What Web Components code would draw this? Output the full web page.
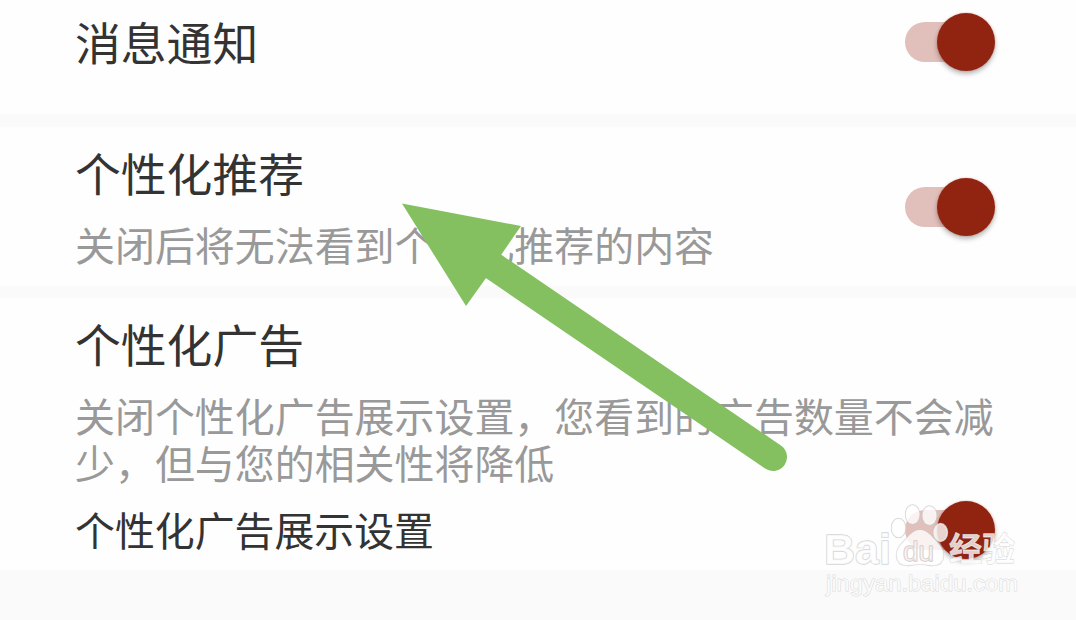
<!DOCTYPE html>
<html lang="zh-CN">
<head>
<meta charset="utf-8">
<title>消息通知</title>
<style>
  body {
    margin: 0;
    width: 1076px;
    height: 620px;
    overflow: hidden;
    background: #fafafa;
    color: #333;
    font-family: "Noto Sans CJK SC", sans-serif;
  }
</style>
</head>
<body>
<settings-page>
  <settings-row style="height: 114px; --top: 13px; --switch: 13px">
    <span slot="title">消息通知</span>
  </settings-row>
  <settings-row style="height: 159px; --top: 17px; --switch: 51px">
    <span slot="title">个性化推荐</span>
    <span slot="desc">关闭后将无法看到个性化推荐的内容</span>
  </settings-row>
  <settings-row style="height: 272px; --top: 17px; --switch: 203px">
    <span slot="title">个性化广告</span>
    <span slot="desc">关闭个性化广告展示设置，您看到的广告数量不会减少，但与您的相关性将降低</span>
    <span slot="extra">个性化广告展示设置</span>
  </settings-row>
</settings-page>
<pointer-arrow></pointer-arrow>
<site-watermark></site-watermark>

<script>
(() => {
  class SettingsPage extends HTMLElement {
    constructor() {
      super();
      this.attachShadow({ mode: "open" });
      this.shadowRoot.innerHTML = /* html */ `
        <style>
          :host {
            display: flex;
            flex-direction: column;
            gap: 12.5px;
          }
        </style>
        <slot></slot>
      `;
    }
  }

  class ToggleSwitch extends HTMLElement {
    constructor() {
      super();
      this.attachShadow({ mode: "open" });
      this.shadowRoot.innerHTML = /* html */ `
        <style>
          :host {
            display: flex;
            align-items: center;
            justify-content: flex-end;
            width: 91px;
            height: 58px;
          }

          .track {
            flex: none;
            width: 80px;
            height: 40px;
            margin-right: -48px;
            border-radius: 20px;
            background: #e1bfba;
          }

          .thumb {
            flex: none;
            width: 58px;
            height: 58px;
            border-radius: 50%;
            background: #912410;
            box-shadow: 0 3px 5px rgba(0, 0, 0, 0.28), 0 0 2px rgba(200, 80, 60, 0.4);
          }
        </style>
        <div class="track"></div>
        <div class="thumb"></div>
      `;
    }
  }

  class SettingsRow extends HTMLElement {
    constructor() {
      super();
      this.attachShadow({ mode: "open" });
      this.shadowRoot.innerHTML = /* html */ `
        <style>
          :host {
            display: flex;
            justify-content: space-between;
            box-sizing: border-box;
            padding: 0 81.5px 0 75px;
            background: #fefefe;
          }

          .text {
            width: 0;
            padding-top: var(--top);
          }

          .title {
            width: 400px;
            font-size: 45.8px;
            line-height: 56px;
          }

          .desc {
            width: 924px;
            margin-top: 21px;
            color: #999;
            font-size: 39.95px;
            line-height: 47px;
          }

          .extra {
            width: 500px;
            margin-top: 18px;
            font-size: 39.9px;
            line-height: 50px;
          }

          toggle-switch {
            margin-top: var(--switch);
          }
        </style>
        <div class="text">
          <div class="title"><slot name="title"></slot></div>
          <div class="desc"><slot name="desc"></slot></div>
          <div class="extra"><slot name="extra"></slot></div>
        </div>
        <toggle-switch></toggle-switch>
      `;
    }
  }

  class PointerArrow extends HTMLElement {
    constructor() {
      super();
      this.attachShadow({ mode: "open" });
      this.shadowRoot.innerHTML = /* html */ `
        <style>
          :host {
            position: absolute;
            left: 402px;
            top: 203px;
          }

          svg {
            display: block;
          }
        </style>
        <svg width="386" height="270" viewBox="402 203 386 270">
          <path d="M402 203.500L521 226L501 255L486 278L466 306Z" fill="#84bf60"/>
          <path d="M490 264L773 457" stroke="#84bf60" stroke-width="28" stroke-linecap="round"/>
        </svg>
      `;
    }
  }

  class SiteWatermark extends HTMLElement {
    constructor() {
      super();
      this.attachShadow({ mode: "open" });
      this.shadowRoot.innerHTML = /* html */ `
        <style>
          :host {
            position: absolute;
            left: 816px;
            top: 496px;
          }

          svg {
            display: block;
          }

          .mark {
            fill: rgba(255, 255, 255, 0.8);
            stroke: rgba(205, 205, 205, 0.85);
            stroke-width: 1.4;
            stroke-linejoin: round;
            paint-order: stroke;
            font-family: "Liberation Sans", "Noto Sans CJK SC", sans-serif;
          }

          .du {
            fill: rgba(255, 255, 255, 0.5);
            stroke: #d6cac8;
          }

          .cjk {
            stroke-width: 0.8;
          }

          .url {
            stroke: rgba(210, 210, 210, 0.8);
            stroke-width: 1;
          }
        </style>
        <svg width="220" height="110" viewBox="816 496 220 110">
          <g class="mark">
            <text x="824" y="563.500" font-size="43" font-weight="bold" textLength="67" lengthAdjust="spacingAndGlyphs">Bai</text>
            <ellipse cx="898.500" cy="528" rx="7" ry="9.500"/>
            <ellipse cx="912.500" cy="514.500" rx="7" ry="9.500"/>
            <ellipse cx="929.500" cy="515.500" rx="7" ry="9.500"/>
            <ellipse cx="940.500" cy="532.500" rx="7" ry="9"/>
            <path d="M920 530C913 530 909 536 904 541C899 546 896 550 896.500 556C897 563 902 566 909 565.500C916 564 924 564 931 565.500C938 566 943 563 943.500 556C944 550 940 546 936 541C931 536 927 530 920 530Z"/>
            <text class="du" x="903" y="561" font-size="27" textLength="31" lengthAdjust="spacingAndGlyphs">du</text>
            <text class="cjk" x="949" y="561" font-size="33" font-weight="bold" textLength="66">经验</text>
            <text class="url" x="826" y="590.500" font-size="22.500" textLength="192" lengthAdjust="spacingAndGlyphs">jingyan.baidu.com</text>
          </g>
        </svg>
      `;
    }
  }

  customElements.define("settings-page", SettingsPage);
  customElements.define("toggle-switch", ToggleSwitch);
  customElements.define("settings-row", SettingsRow);
  customElements.define("pointer-arrow", PointerArrow);
  customElements.define("site-watermark", SiteWatermark);
})();
</script>
</body>
</html>
